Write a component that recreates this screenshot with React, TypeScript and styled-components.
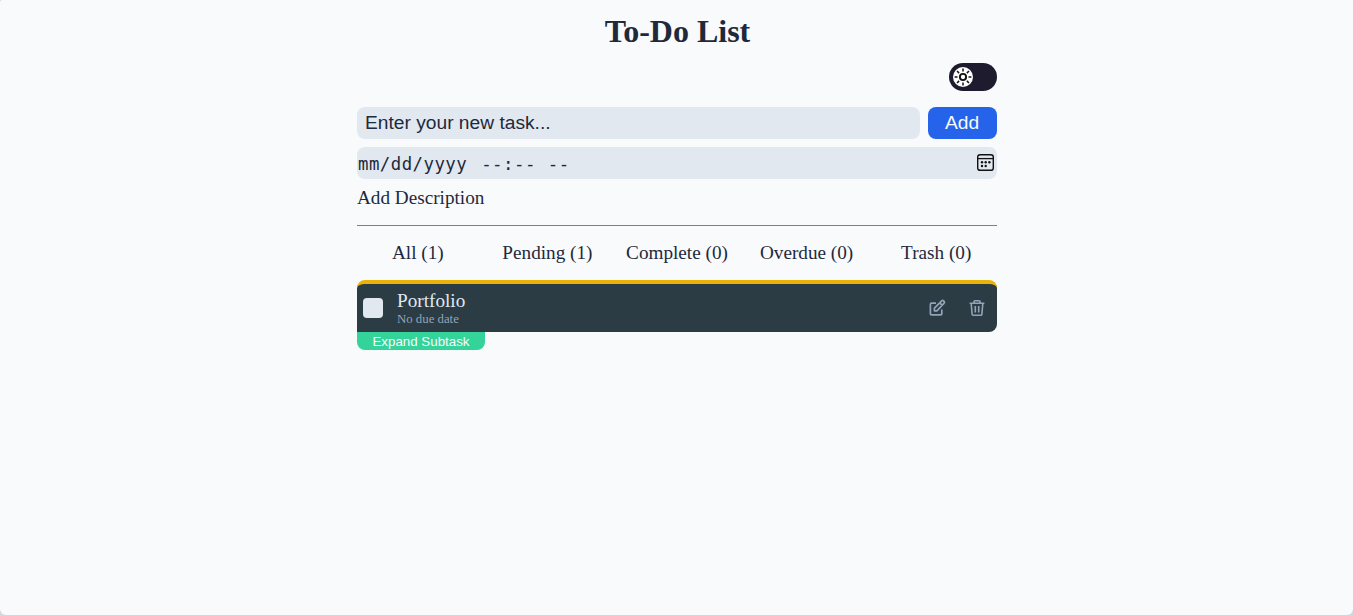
import React from "react";
import styled, { createGlobalStyle } from "styled-components";

const GlobalStyle = createGlobalStyle`
  * { box-sizing: border-box; }
  html, body { margin: 0; background: #d4d7da; }
  body { font-family: "Liberation Serif", serif; color: #1e293b; }
  button { border: 0; cursor: pointer; }
`;

const Page = styled.div`
  height: 615px;
  background: #f8fafc;
  border-radius: 2px 0 6px 6px;
`;
const Main = styled.main`
  width: 640px;
  margin: 0 auto;
  position: relative;
  left: 0.5px;
  padding-top: 12px;
`;
const Title = styled.h1`
  margin: 0;
  padding-left: 1px;
  text-align: center;
  font-size: 32px;
  line-height: 38px;
`;
const ToggleRow = styled.div`
  display: flex;
  justify-content: flex-end;
  margin: 13px 0 16px;
`;
const Toggle = styled.button`
  display: flex;
  align-items: center;
  width: 48px;
  height: 28px;
  padding: 0 4px;
  border-radius: 14px;
  background: #1e1b2e;
`;
const Row = styled.div`
  display: flex;
  gap: 8px;
`;
const TaskInput = styled.input`
  flex: 1;
  min-width: 0;
  height: 32px;
  padding: 0 8px 1px;
  border: 0;
  border-radius: 8px;
  background: #e2e8f0;
  font: 19.2px "Liberation Sans", sans-serif;
  &::placeholder { color: #1e293b; opacity: 1; }
`;
const AddButton = styled.button`
  width: 69px;
  height: 32px;
  padding: 0 1px 0 0;
  border-radius: 8px;
  background: #2563eb;
  color: #f8fafc;
  font: 19.2px "Liberation Sans", sans-serif;
`;
const DateField = styled.div`
  display: flex;
  align-items: center;
  height: 32px;
  margin-top: 8px;
  padding: 1px 2px 0 1px;
  border-radius: 8px;
  background: #e2e8f0;
  font: 17.4px "DejaVu Sans Mono", monospace;
  letter-spacing: 0.45px;
`;
const DatePart = styled.span<{ $gap: number }>`
  margin-right: ${(p) => p.$gap}px;
`;
const CalendarIcon = styled.svg`
  margin: -2px 0 0 auto;
`;
const Description = styled.div`
  box-sizing: content-box;
  height: 22px;
  margin-bottom: 16px;
  padding: 8px 0 16px;
  border-bottom: 1px solid #7b7f87;
  font-size: 19.2px;
  line-height: 22px;
`;
const Tabs = styled.nav`
  display: grid;
  grid-template-columns: repeat(5, 1fr);
  column-gap: 8px;
  height: 38px;
`;
const Tab = styled.button`
  padding: 0;
  height: 22px;
  background: transparent;
  color: #1e293b;
  font: 19.2px/22px "Liberation Serif", serif;
  white-space: nowrap;
`;
const Task = styled.article`
  display: flex;
  align-items: center;
  height: 52px;
  padding: 0 10px 0 6px;
  border-top: 4px solid #eab308;
  border-radius: 8px 8px 8px 0;
  background: #2b3c44;
`;
const Check = styled.span`
  width: 20px;
  height: 20px;
  margin-right: 14px;
  border-radius: 4px;
  background: #e2e8f0;
`;
const TaskText = styled.div`
  flex: 1;
`;
const TaskName = styled.div`
  color: #e2e8f0;
  font-size: 19.2px;
  line-height: 22px;
`;
const Due = styled.div`
  color: #94a3b8;
  font-size: 12.8px;
  line-height: 14px;
`;
const Actions = styled.div`
  display: flex;
  gap: 20px;
  color: #94a3b8;
  svg { display: block; }
`;
const Expand = styled.button`
  display: block;
  width: 128px;
  height: 18px;
  padding: 1px 0 0;
  border-radius: 0 0 8px 8px;
  background: #34d399;
  color: #f8fafc;
  font: 13.33px/17px "Liberation Sans", sans-serif;
`;

const tabs = ["All (1)", "Pending (1)", "Complete (0)", "Overdue (0)", "Trash (0)"];
const rays = [0, 45, 90, 135, 180, 225, 270, 315];

export default function App() {
  return (
    <>
      <GlobalStyle />
      <Page>
        <Main>
          <Title>To-Do List</Title>
          <ToggleRow>
            <Toggle aria-label="Toggle theme">
              <svg width="20" height="20" viewBox="0 0 20 20">
                <circle cx="10" cy="10" r="10" fill="#fff" />
                <g stroke="#111" fill="none">
                  <circle cx="10" cy="10" r="3.1" strokeWidth="1.9" />
                  {rays.map((a) => (
                    <path key={a} d="M10 1.6v2.9" strokeWidth="1.5" transform={`rotate(${a} 10 10)`} />
                  ))}
                </g>
              </svg>
            </Toggle>
          </ToggleRow>
          <Row>
            <TaskInput placeholder="Enter your new task..." />
            <AddButton>Add</AddButton>
          </Row>
          <DateField>
            <DatePart $gap={14}>mm/dd/yyyy</DatePart>
            <DatePart $gap={12}>--:--</DatePart>
            <DatePart $gap={0}>--</DatePart>
            <CalendarIcon width="19" height="19" viewBox="0 0 19 19">
              <rect x="1.7" y="1.7" width="15.6" height="15.6" rx="2.4" fill="none" stroke="#111" strokeWidth="1.4" />
              <path d="M2 5.6h15" stroke="#111" strokeWidth="1.3" />
              <g fill="#111">
                <circle cx="6" cy="9.3" r="1.2" />
                <circle cx="9.7" cy="9.3" r="1.2" />
                <circle cx="13.4" cy="9.3" r="1.2" />
                <circle cx="6" cy="13" r="1.2" />
                <circle cx="9.7" cy="13" r="1.2" />
              </g>
            </CalendarIcon>
          </DateField>
          <Description>Add Description</Description>
          <Tabs>
            {tabs.map((t) => (
              <Tab key={t}>{t}</Tab>
            ))}
          </Tabs>
          <Task>
            <Check />
            <TaskText>
              <TaskName>Portfolio</TaskName>
              <Due>No due date</Due>
            </TaskText>
            <Actions>
              <svg width="20" height="20" viewBox="0 0 20 20" fill="none" stroke="currentColor" strokeWidth="1.7" strokeLinejoin="round">
                <path d="M9 5.2H4.4a1 1 0 0 0-1 1v9.6a1 1 0 0 0 1 1h9.4a1 1 0 0 0 1-1V11.4" />
                <path d="M7.4 12.8v-2.7l7.3-7.3a1.3 1.3 0 0 1 1.8 0l.6.6a1.3 1.3 0 0 1 0 1.8L9.9 12.8zM12.7 4.8l2.5 2.5" />
              </svg>
              <svg width="20" height="20" viewBox="0 0 20 20" fill="none" stroke="currentColor" strokeWidth="1.6" strokeLinejoin="round">
                <path d="M2.6 5.2h14.8M7 5V3.6a.8.8 0 0 1 .8-.8h4.4a.8.8 0 0 1 .8.8V5M4.2 5.4l.9 10.9a1 1 0 0 0 1 .9h7.8a1 1 0 0 0 1-.9l.9-10.9M8.3 8v6.5M11.7 8v6.5" />
              </svg>
            </Actions>
          </Task>
          <Expand>Expand Subtask</Expand>
        </Main>
      </Page>
    </>
  );
}
